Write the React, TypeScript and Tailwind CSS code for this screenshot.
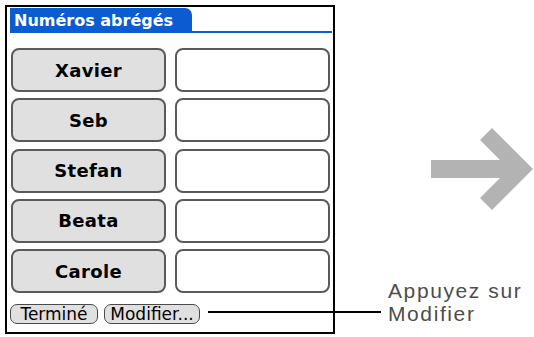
import React from 'react';

const names = ['Xavier', 'Seb', 'Stefan', 'Beata', 'Carole'];

const palm = { fontFamily: '"DejaVu Sans", "Noto Sans", sans-serif' };

function Arrow() {
  return (
    <svg width="104" height="88" viewBox="430 127 104 88" className="block shrink-0">
      <polygon
        points="431,160 500,160 480,140 492,128 533,169 492,210 480,198 500,178 431,178"
        fill="#b3b3b3"
      />
    </svg>
  );
}

export default function App() {
  return (
    <div className="relative w-[534px] h-[337px] bg-white overflow-hidden">
      <div className="flex">
        {/* Handheld screen */}
        <div
          className="shrink-0 mt-[5px] ml-[5px] w-[330px] h-[329px] border-2 border-black flex flex-col"
          style={palm}
        >
          <div className="mt-[1px] ml-[3px] mr-[1px] flex items-end">
            <div className="h-[25px] w-[182px] bg-[#0a5cd0] rounded-tr-[7px] text-white font-bold text-[16px] leading-[25px] pl-[4px] whitespace-nowrap">
              Numéros abrégés
            </div>
            <div className="flex-1 h-[2px] bg-[#0a5cd0]" />
          </div>

          <div className="mt-[15px] ml-[4px] mr-[2px] flex flex-col gap-[6.25px]">
            {names.map((name) => (
              <div key={name} className="flex gap-[9px]">
                <div className="w-[155px] h-[44px] rounded-[8px] border-2 border-[#5a5a5a] bg-[#e0e0e0] flex items-center justify-center font-bold text-[18px] tracking-[0.3px] text-black">
                  {name}
                </div>
                <div className="w-[155px] h-[44px] rounded-[8px] border-2 border-[#5a5a5a] bg-white" />
              </div>
            ))}
          </div>

          <div className="mt-[11px] ml-[3px] flex gap-[6px]">
            <div className="w-[88px] h-[20px] rounded-[7px] border-[1.5px] border-[#4a4a4a] bg-[#e0e0e0] flex items-center justify-center text-[17px] leading-[18px] text-black">
              Terminé
            </div>
            <div className="w-[96px] h-[20px] rounded-[7px] border-[1.5px] border-[#4a4a4a] bg-[#e0e0e0] flex items-center justify-center text-[17px] leading-[18px] text-black">
              Modifier...
            </div>
          </div>
        </div>

        {/* Right side: arrow and callout */}
        <div className="flex-1 flex flex-col">
          <div className="mt-[127px] flex justify-end">
            <Arrow />
          </div>
          <div
            className="mt-[64px] ml-[53px] text-[21px] leading-[23px] tracking-[1.6px] text-[#4d4d4d] whitespace-nowrap"
            style={{ fontFamily: '"Liberation Sans", Arial, sans-serif' }}
          >
            <div>Appuyez sur</div>
            <div>Modifier</div>
          </div>
        </div>
      </div>

      {/* leader line */}
      <div className="absolute left-[208px] top-[311px] w-[173px] h-[2px] bg-black" />
    </div>
  );
}
